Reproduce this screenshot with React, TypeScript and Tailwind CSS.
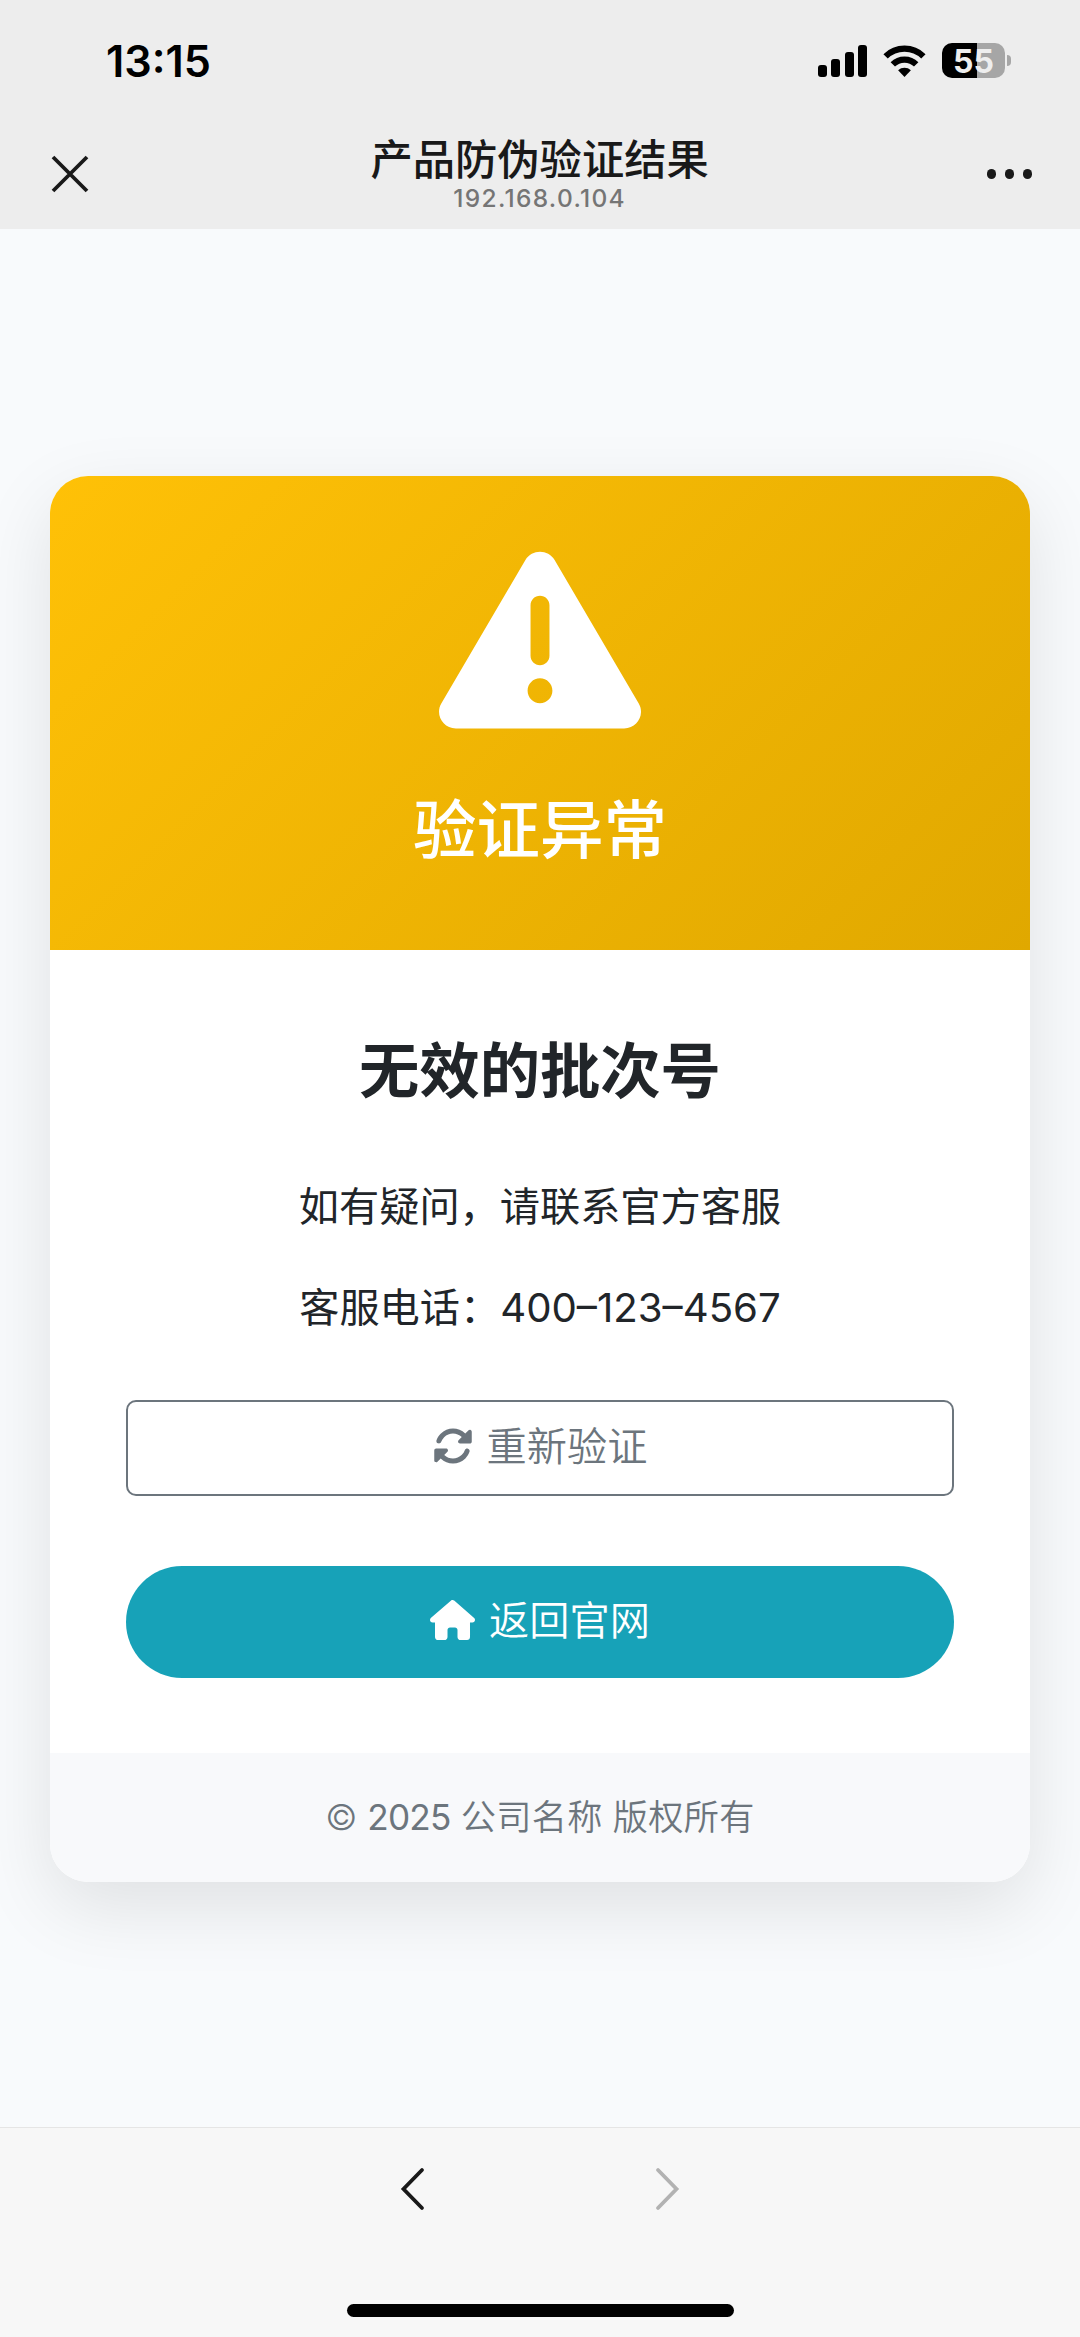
import { FaHouse, FaRotate } from 'react-icons/fa6';

const signalBars = ['h-[12px]', 'h-[18px]', 'h-[25px]', 'h-[32px]'];

function StatusBar() {
  return (
    <div className="flex justify-between h-[122px] pl-[106px] pr-[69px] text-black">
      <div className="pt-[36px] text-[43.2px] leading-[51px] font-semibold">13:15</div>
      <div className="flex items-start pt-[43px]">
        <div className="flex items-end gap-[4.5px] h-[34px] mr-[16px]">
          {signalBars.map((height) => (
            <span key={height} className={`w-[9px] rounded-[3px] bg-black ${height}`} />
          ))}
        </div>
        <svg className="w-[43px] h-[32px] mt-[2px] mr-[16px]" viewBox="0 0 43 32" fill="none">
          <path d="M2.6 11.4a27 27 0 0 1 37.8 0" stroke="#000" strokeWidth="6.2" />
          <path d="M9.8 19.4a16.5 16.5 0 0 1 23.4 0" stroke="#000" strokeWidth="6.2" />
          <path d="M21.5 32l-6.4-6.8a9.6 9.6 0 0 1 12.8 0z" fill="#000" />
        </svg>
        <div className="flex items-center">
          <div className="flex items-center justify-center w-[63px] h-[35px] pt-[2px] rounded-[10px] bg-[linear-gradient(90deg,#000_55%,#a6a6a6_55%)] text-[#eee] text-[32px] leading-none font-bold">
            55
          </div>
          <span className="w-[4px] h-[11px] ml-[2px] rounded-r-full bg-[#a6a6a6]" />
        </div>
      </div>
    </div>
  );
}

function NavBar() {
  return (
    <div className="flex justify-between h-[107px] px-[48px]">
      <button className="h-[44px] mt-[30px]" aria-label="关闭">
        <svg className="w-[44px] h-[44px]" viewBox="0 0 44 44" fill="none">
          <path d="M5 5l34 34M39 5L5 39" stroke="#191919" strokeWidth="3.8" />
        </svg>
      </button>
      <div className="flex flex-col items-center pt-[13px] text-center">
        <h1 className="text-[42.3px] leading-[50px] font-medium text-[#191919]">产品防伪验证结果</h1>
        <p className="-mt-px text-[24.5px] leading-[28px] font-medium tracking-[1.3px] text-[#757575]">192.168.0.104</p>
      </div>
      <button className="flex items-center gap-[8.6px] h-[10px] mt-[47px]" aria-label="更多">
        <span className="size-[9.2px] rounded-full bg-[#191919]" />
        <span className="size-[9.2px] rounded-full bg-[#191919]" />
        <span className="size-[9.2px] rounded-full bg-[#191919]" />
      </button>
    </div>
  );
}

function WarningIcon() {
  return (
    <svg className="size-[202px]" viewBox="0 0 512 512" fill="currentColor">
      <path d="M506.3 417l-213.3-364c-16.33-28-57.54-28-73.98 0l-213.2 364C-10.59 444.9 9.849 480 42.74 480h426.6C502.1 480 522.6 445 506.3 417zM232 168c0-13.25 10.75-24 24-24S280 154.8 280 168v128c0 13.25-10.75 24-24 24S232 309.3 232 296V168zM256 416c-17.36 0-31.44-14.08-31.44-31.44c0-17.36 14.07-31.44 31.44-31.44s31.44 14.08 31.44 31.44C287.4 401.9 273.4 416 256 416z" />
    </svg>
  );
}

function ResultCard() {
  return (
    <div className="w-[980px] h-[1406px] flex flex-col rounded-[38px] overflow-hidden bg-white shadow-[0_25px_75px_rgba(0,0,0,0.1)]">
      <div className="flex flex-col items-center h-[474px] pt-[63px] bg-[linear-gradient(135deg,#ffc107,#e0a800)] text-white">
        <WarningIcon />
        <h2 className="mt-[51px] text-[63.5px] leading-[76px] font-medium">验证异常</h2>
      </div>

      <div className="flex flex-col h-[803px] px-[76px] pt-[86px] text-center text-[#212529]">
        <h3 className="text-[60.3px] leading-[72px] font-bold">无效的批次号</h3>
        <p className="mt-[69px] text-[40.2px] leading-[60px]">如有疑问，请联系官方客服</p>
        <p className="mt-[41px] text-[40.2px] leading-[60px]">客服电话：400–123–4567</p>
        <button className="flex items-center justify-center h-[96px] mt-[62px] pb-[2px] border-[2.5px] border-[#6c757d] rounded-[10px] text-[40.2px] leading-[60px] font-[350] text-[#6c757d]">
          <FaRotate className="size-[40px] mr-[14px] mb-[2px]" />
          重新验证
        </button>
        <button className="flex items-center justify-center h-[112px] mt-[70px] pb-[2px] rounded-full bg-[#17a2b8] text-[40.2px] leading-[60px] font-[350] text-white">
          <FaHouse className="w-[45px] h-[40px] mr-[14px] mb-[2px]" />
          返回官网
        </button>
      </div>

      <div className="flex items-center justify-center flex-1 bg-[#f8f9fb] text-[35.2px] leading-[53px] font-[350] whitespace-pre text-[#6c757d]">
        © <span className="font-normal tracking-[-0.8px]">2025</span>
        <span className="tracking-[0.3px]"> 公司名称 版权所有</span>
      </div>
    </div>
  );
}

function BottomBar() {
  return (
    <div className="flex flex-col items-center h-[210px] border-t border-[#e5e5e5] bg-[#f7f7f7]">
      <div className="flex justify-between w-[280px] mt-[39px]">
        <svg className="w-[26px] h-[44px]" viewBox="0 0 26 44" fill="none">
          <path d="M22 3L3.5 22L22 41" stroke="#191919" strokeWidth="3.8" strokeLinecap="round" />
        </svg>
        <svg className="w-[26px] h-[44px]" viewBox="0 0 26 44" fill="none">
          <path d="M4 3L22.5 22L4 41" stroke="#b2b2b2" strokeWidth="3.8" strokeLinecap="round" />
        </svg>
      </div>
      <div className="w-[387px] h-[13px] mt-[93px] rounded-full bg-black" />
    </div>
  );
}

export default function App() {
  return (
    <div
      lang="zh-CN"
      className="flex flex-col w-[1080px] h-[2337px] overflow-hidden bg-[#f8fafc] font-[Inter,'Noto_Sans_CJK_SC',sans-serif]"
    >
      <header className="relative z-10 h-[229px] bg-[#ededed]">
        <StatusBar />
        <NavBar />
      </header>
      <main className="flex-1 flex justify-center pt-[247px]">
        <ResultCard />
      </main>
      <BottomBar />
    </div>
  );
}
